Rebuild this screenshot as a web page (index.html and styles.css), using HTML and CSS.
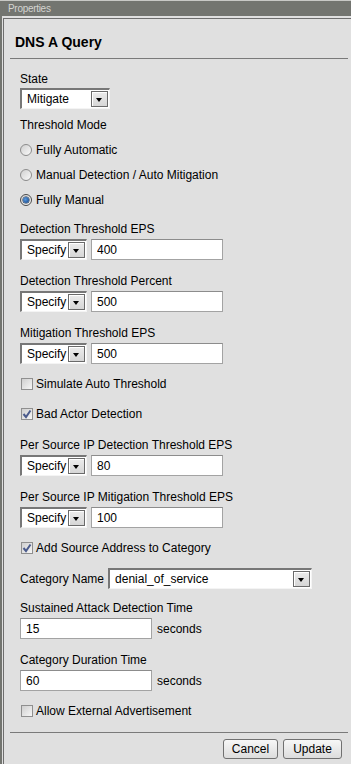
FILE: index.html
```html
<!DOCTYPE html>
<html lang="en">
<head>
    <meta charset="UTF-8">
    <meta name="viewport" content="width=device-width, initial-scale=1.0">
    <title>Properties - DNS A Query</title>
    <link rel="stylesheet" href="styles.css">
</head>
<body>
    <div class="titlebar">Properties</div>
    <div class="panel">
        <div class="panel-inner">
            <h2 class="heading">DNS A Query</h2>
            <div class="rule"></div>

            <div class="form">
                <!-- State -->
                <div class="field field-first">
                    <div class="label">State</div>
                    <div class="select select-state"><span class="select-text">Mitigate</span><span class="arrow"></span></div>
                </div>

                <!-- Threshold mode -->
                <div class="field field-mode">
                    <div class="label">Threshold Mode</div>
                    <div class="radio"><span class="radio-dot"></span>Fully Automatic</div>
                    <div class="radio"><span class="radio-dot"></span>Manual Detection / Auto Mitigation</div>
                    <div class="radio"><span class="radio-dot checked"></span>Fully Manual</div>
                </div>

                <div class="field field-after-radio">
                    <div class="label">Detection Threshold EPS</div>
                    <div class="row">
                        <div class="select select-small"><span class="select-text">Specify</span><span class="arrow"></span></div>
                        <input class="text-input" type="text" value="400">
                    </div>
                </div>

                <div class="field">
                    <div class="label">Detection Threshold Percent</div>
                    <div class="row">
                        <div class="select select-small"><span class="select-text">Specify</span><span class="arrow"></span></div>
                        <input class="text-input" type="text" value="500">
                    </div>
                </div>

                <div class="field">
                    <div class="label">Mitigation Threshold EPS</div>
                    <div class="row">
                        <div class="select select-small"><span class="select-text">Specify</span><span class="arrow"></span></div>
                        <input class="text-input" type="text" value="500">
                    </div>
                </div>

                <div class="check"><span class="box"></span>Simulate Auto Threshold</div>
                <div class="check"><span class="box checked"><svg width="10" height="10" viewBox="0 0 10 10"><path d="M1.5 5 L4 8 L8.5 1.5" fill="none" stroke="#4b5b8c" stroke-width="2"/></svg></span>Bad Actor Detection</div>

                <div class="field field-after-check">
                    <div class="label">Per Source IP Detection Threshold EPS</div>
                    <div class="row">
                        <div class="select select-small"><span class="select-text">Specify</span><span class="arrow"></span></div>
                        <input class="text-input" type="text" value="80">
                    </div>
                </div>

                <div class="field">
                    <div class="label">Per Source IP Mitigation Threshold EPS</div>
                    <div class="row">
                        <div class="select select-small"><span class="select-text">Specify</span><span class="arrow"></span></div>
                        <input class="text-input" type="text" value="100">
                    </div>
                </div>

                <div class="check"><span class="box checked"><svg width="10" height="10" viewBox="0 0 10 10"><path d="M1.5 5 L4 8 L8.5 1.5" fill="none" stroke="#4b5b8c" stroke-width="2"/></svg></span>Add Source Address to Category</div>

                <div class="category-row">
                    <span class="inline-label">Category Name</span>
                    <div class="select select-category"><span class="select-text">denial_of_service</span><span class="arrow"></span></div>
                </div>

                <div class="field field-time">
                    <div class="label">Sustained Attack Detection Time</div>
                    <div class="row">
                        <input class="text-input" type="text" value="15">
                        <span class="unit">seconds</span>
                    </div>
                </div>

                <div class="field">
                    <div class="label">Category Duration Time</div>
                    <div class="row">
                        <input class="text-input" type="text" value="60">
                        <span class="unit">seconds</span>
                    </div>
                </div>

                <div class="check"><span class="box"></span>Allow External Advertisement</div>
            </div>

            <div class="rule rule-bottom"></div>
            <div class="buttons">
                <button class="btn btn-cancel">Cancel</button>
                <button class="btn btn-update">Update</button>
            </div>
        </div>
    </div>
</body>
</html>
```

FILE: styles.css
```css
/* Reset */
* {
    margin: 0;
    padding: 0;
    box-sizing: border-box;
}

body {
    font-family: "Liberation Sans", Arial, sans-serif;
    font-size: 12px;
    color: #000;
    background-color: #737570;
    border-top: 1px solid #c8c9c6;
    height: 764px;
    overflow: hidden;
}

/* Title bar */
.titlebar {
    height: 15px;
    padding-left: 8px;
    color: #d3d4d0;
    font-size: 10px;
    line-height: 15px;
    letter-spacing: -0.3px;
}

/* Panel */
.panel {
    margin-left: 2px;
    padding: 2px 0 0 1px;
    background-color: #e0e0e0;
    height: 748px;
}

.panel-inner {
    border-top: 1px solid #6e6e6e;
    border-left: 1px solid #6e6e6e;
    height: 100%;
}

.heading {
    padding: 15px 0 0 11px;
    font-size: 14px;
    line-height: 16px;
    font-weight: bold;
}

.rule {
    height: 1px;
    background-color: #7a7a7a;
    margin: 8px 3px 0 6px;
}

.rule-bottom {
    margin-top: 14px;
}

/* Form */
.form {
    padding-left: 16px;
}

.label {
    line-height: 14px;
}

.field {
    margin-top: 14px;
}

.field-first {
    margin-top: 13px;
}

.field-first .select {
    margin-top: 2px;
}

.field-mode {
    margin-top: 9px;
}

.field-after-radio {
    margin-top: 15px;
}

.field-after-check {
    margin-top: 17px;
}

.field-time {
    margin-top: 12px;
}

.row {
    display: flex;
    align-items: center;
    gap: 4px;
    margin-top: 3px;
}

/* Fake select boxes */
.select {
    display: flex;
    align-items: center;
    height: 21px;
    background-color: #fff;
    border-style: solid;
    border-width: 2px 1px 1px 2px;
    border-color: #777 #f4f4f4 #f4f4f4 #777;
}

.select-text {
    flex: 1;
    padding-left: 5px;
    line-height: 14px;
    white-space: nowrap;
    overflow: hidden;
}

.select-state {
    width: 90px;
}

.select-small {
    width: 67px;
}

.select-category {
    width: 204px;
}

.arrow {
    position: relative;
    flex: none;
    width: 17px;
    height: 16px;
    margin-right: 1px;
    background: linear-gradient(#ececec, #d6d6d6);
    border: 1px solid #6a6a6a;
    box-shadow: inset 1px 1px 0 #fff;
}

.arrow::after {
    content: "";
    position: absolute;
    left: 4px;
    top: 6px;
    border-left: 3.5px solid transparent;
    border-right: 3.5px solid transparent;
    border-top: 4px solid #000;
}

.text-input {
    width: 132px;
    height: 21px;
    padding-left: 5px;
    border: 1px solid #a3a3a3;
    border-top-color: #8c8c8c;
    background-color: #fff;
    font-family: "Liberation Sans", Arial, sans-serif;
    font-size: 12px;
    color: #000;
    outline: none;
}

.unit {
    margin-left: 1px;
}

/* Radios */
.radio {
    display: flex;
    align-items: center;
    gap: 4px;
    height: 14px;
    margin-top: 11px;
}

.radio-dot {
    position: relative;
    width: 12px;
    height: 12px;
    border-radius: 50%;
    border: 1px solid #8c8c8c;
    background: linear-gradient(135deg, #d0d0d0, #fafafa);
}

.radio-dot.checked {
    border-color: #4a4a4a;
}

.radio-dot.checked::after {
    content: "";
    position: absolute;
    left: 2px;
    top: 2px;
    width: 6px;
    height: 6px;
    border-radius: 50%;
    background: radial-gradient(circle at 40% 40%, #5a9ae0, #0c3d7e);
    box-shadow: 0 0 0 0.5px #1a2a40;
}

/* Checkboxes */
.check {
    display: flex;
    align-items: center;
    gap: 3px;
    height: 14px;
    margin-top: 13px;
}

.check + .check {
    margin-top: 16px;
}

.field + .check {
    margin-top: 13px;
}

.box {
    display: flex;
    align-items: center;
    justify-content: center;
    width: 12px;
    height: 12px;
    margin-left: 1px;
    border: 1px solid #8f8f8f;
    background: linear-gradient(135deg, #cfcfcf, #f6f6f6);
}

/* Category */
.category-row {
    display: flex;
    align-items: center;
    gap: 4px;
    margin-top: 13px;
}

/* Buttons */
.buttons {
    display: flex;
    justify-content: flex-end;
    gap: 5px;
    margin-top: 6px;
    padding-right: 9px;
}

.btn {
    height: 20px;
    border: 1px solid #707070;
    border-radius: 3px;
    background: linear-gradient(#f7f7f7, #dcdcdc);
    font-family: "Liberation Sans", Arial, sans-serif;
    font-size: 12px;
    color: #000;
    cursor: pointer;
}

.btn-cancel {
    width: 55px;
}

.btn-update {
    width: 59px;
}
```
